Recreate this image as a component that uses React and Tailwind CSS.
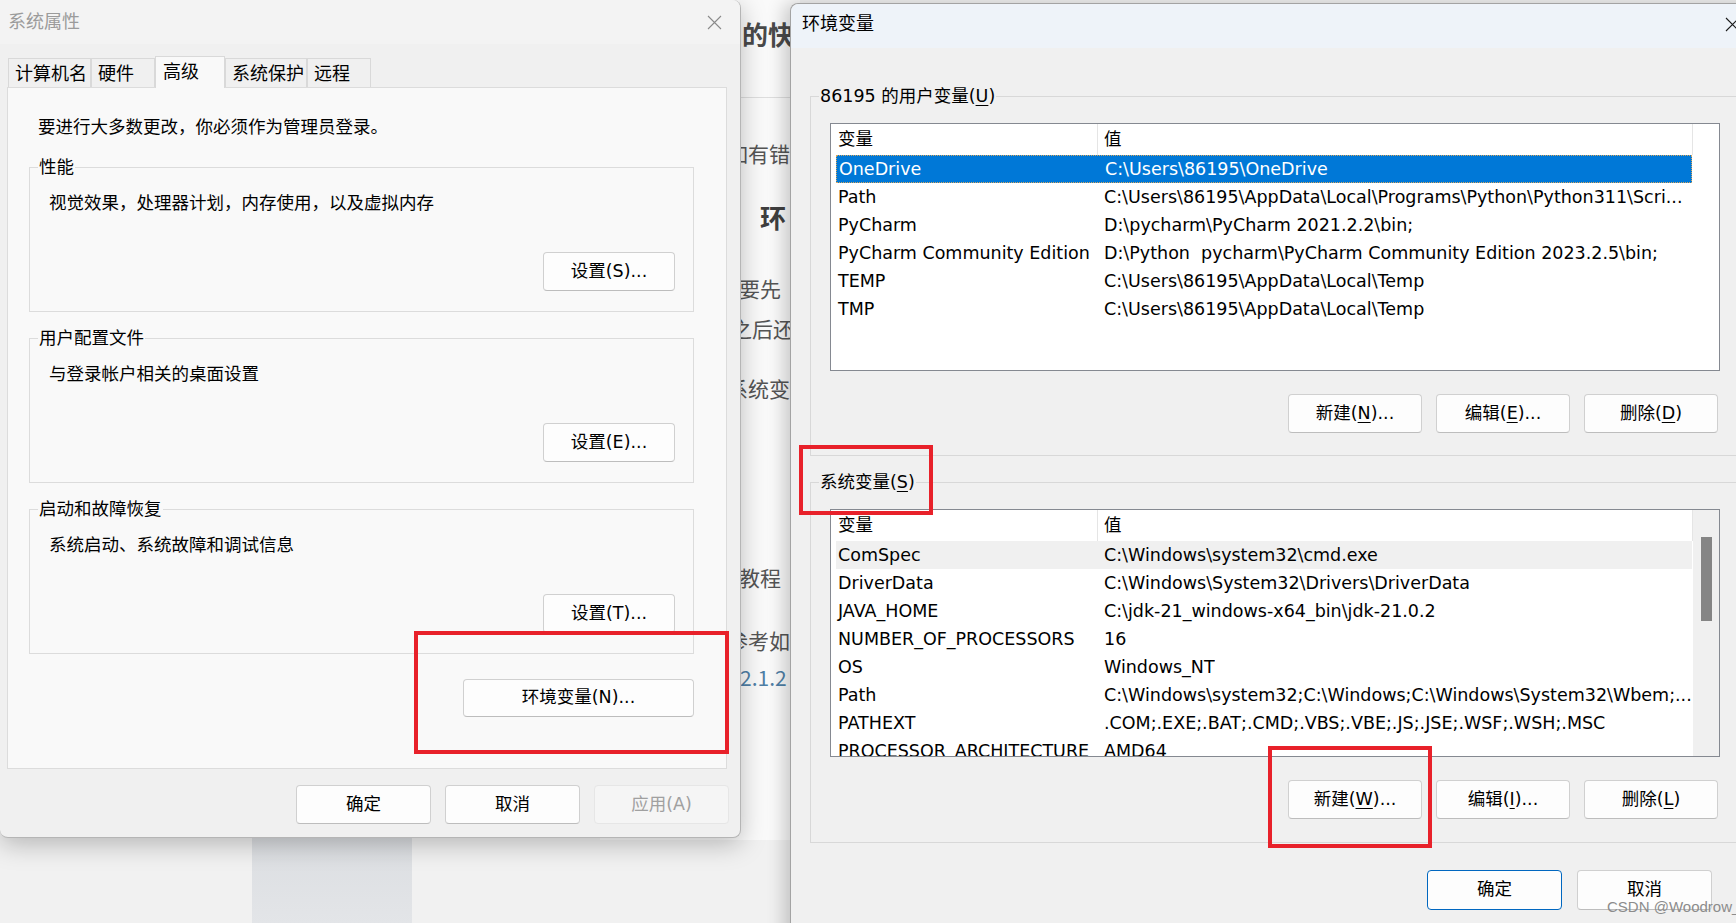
import React from "react";

function CloseX({ color = "#8a8a8a", className = "" }) {
  return (
    <svg width="15" height="15" viewBox="0 0 15 15" className={`shrink-0 ${className}`}>
      <path d="M1 1L14 14M14 1L1 14" stroke={color} strokeWidth="1.1" fill="none" />
    </svg>
  );
}

function Btn({ children, className = "", primary = false, disabled = false }) {
  const tone = primary
    ? "border-[1.5px] border-[#0067c0] bg-[#fdfdfd] text-black"
    : disabled
    ? "border border-[#e6e6e6] bg-[#f5f5f5] text-[#a0a0a0]"
    : "border border-[#d0d0d0] border-b-[#bdbdbd] bg-[#fdfdfd] text-black";
  return (
    <div className={`flex items-center justify-center whitespace-nowrap rounded-[4px] text-[17.5px] leading-none ${tone} ${className}`}>
      {children}
    </div>
  );
}

function U({ children }) {
  return <span className="underline underline-offset-[3px] decoration-1">{children}</span>;
}

function LeftGroup({ label, desc, btn, className = "" }) {
  return (
    <div className={`relative ml-[21px] h-[145px] w-[665px] shrink-0 border border-[#dcdcdc] ${className}`}>
      <span className="absolute -top-[13px] left-[8px] bg-[#f9f9f9] px-[1px] text-[17.5px] leading-[24px]">{label}</span>
      <div className="pl-[19px] pt-[23px] text-[17.5px] leading-[24px]">{desc}</div>
      <Btn className="ml-[513px] mt-[37px] h-[39px] w-[132px]">{btn}</Btn>
    </div>
  );
}

function Tab({ children, w, selected }) {
  return selected ? (
    <div className={`relative z-10 -mb-[1px] flex h-[32px] items-center border border-b-0 border-[#d9d9d9] bg-[#f9f9f9] pl-[7px] pb-[2px] text-[18px] ${w}`}>
      {children}
    </div>
  ) : (
    <div className={`flex h-[29px] items-center border border-b-0 border-[#d9d9d9] bg-[#f0f0f0] pl-[6px] text-[18px] ${w}`}>
      {children}
    </div>
  );
}

function LeftWindow() {
  return (
    <div className="absolute left-0 top-0 flex h-[838px] w-[741px] flex-col rounded-br-[8px] rounded-bl-[8px] rounded-tr-[8px] border-b border-r border-[#b5b5b5] bg-[#f0f0f0] shadow-[0_6px_26px_rgba(0,0,0,0.25)]">
      <div className="flex h-[44px] shrink-0 items-center justify-between rounded-tr-[8px] bg-[#f3f3f3] pl-[8px] pr-[18px]">
        <span className="whitespace-nowrap text-[18px] leading-none text-[#9b9b9b]">系统属性</span>
        <CloseX />
      </div>
      <div className="ml-[8px] mt-[13px] flex h-[30px] shrink-0 items-end">
        <Tab w="w-[83px]">计算机名</Tab>
        <Tab w="w-[64px]">硬件</Tab>
        <Tab w="w-[70px]" selected>高级</Tab>
        <Tab w="w-[82px]">系统保护</Tab>
        <Tab w="w-[64px]">远程</Tab>
      </div>
      <div className="ml-[7px] flex h-[682px] w-[720px] shrink-0 flex-col border border-[#dcdcdc] bg-[#f9f9f9]">
        <div className="ml-[30px] mt-[27px] text-[17.5px] leading-[24px]">要进行大多数更改，你必须作为管理员登录。</div>
        <LeftGroup className="mt-[28px]" label="性能" desc="视觉效果，处理器计划，内存使用，以及虚拟内存" btn="设置(S)..." />
        <LeftGroup className="mt-[26px]" label="用户配置文件" desc="与登录帐户相关的桌面设置" btn="设置(E)..." />
        <LeftGroup className="mt-[26px]" label="启动和故障恢复" desc="系统启动、系统故障和调试信息" btn="设置(T)..." />
        <Btn className="ml-[455px] mt-[25px] h-[38px] w-[231px]">环境变量(N)...</Btn>
      </div>
      <div className="ml-[296px] mt-[16px] flex gap-[14px]">
        <Btn className="h-[39px] w-[135px]">确定</Btn>
        <Btn className="h-[39px] w-[135px]">取消</Btn>
        <Btn className="h-[39px] w-[135px]" disabled>应用(A)</Btn>
      </div>
    </div>
  );
}

const userVars = [
  ["OneDrive", "C:\\Users\\86195\\OneDrive"],
  ["Path", "C:\\Users\\86195\\AppData\\Local\\Programs\\Python\\Python311\\Scri..."],
  ["PyCharm", "D:\\pycharm\\PyCharm 2021.2.2\\bin;"],
  ["PyCharm Community Edition", "D:\\Python  pycharm\\PyCharm Community Edition 2023.2.5\\bin;"],
  ["TEMP", "C:\\Users\\86195\\AppData\\Local\\Temp"],
  ["TMP", "C:\\Users\\86195\\AppData\\Local\\Temp"],
];

const sysVars = [
  ["ComSpec", "C:\\Windows\\system32\\cmd.exe"],
  ["DriverData", "C:\\Windows\\System32\\Drivers\\DriverData"],
  ["JAVA_HOME", "C:\\jdk-21_windows-x64_bin\\jdk-21.0.2"],
  ["NUMBER_OF_PROCESSORS", "16"],
  ["OS", "Windows_NT"],
  ["Path", "C:\\Windows\\system32;C:\\Windows;C:\\Windows\\System32\\Wbem;..."],
  ["PATHEXT", ".COM;.EXE;.BAT;.CMD;.VBS;.VBE;.JS;.JSE;.WSF;.WSH;.MSC"],
  ["PROCESSOR_ARCHITECTURE", "AMD64"],
];

function VarList({ rows, selected, hover, scroll }) {
  return (
    <div className="ml-[19px] mt-[26px] flex h-[248px] w-[890px] shrink-0 overflow-hidden border border-[#858991] bg-white">
      <div className="flex w-[862px] shrink-0 flex-col">
        <div className="flex h-[31px] shrink-0 items-center text-[17.5px]">
          <div className="flex h-full w-[267px] items-center border-r border-[#e5e5e5] pl-[7px]">变量</div>
          <div className="flex h-full w-[595px] items-center border-r border-[#e5e5e5] pl-[6px]">值</div>
        </div>
        {rows.map(([k, v], i) => {
          const sel = i === selected;
          const hov = i === hover;
          return (
            <div
              key={i}
              className={`ml-[5px] flex h-[28px] w-[856px] shrink-0 items-center whitespace-pre text-[17.5px] ${
                sel ? "border border-dotted border-[#d8a65c] bg-[#0078d7] text-white" : hov ? "bg-[#f0f0f0] text-black" : "text-black"
              }`}
            >
              <div className="w-[261px] shrink-0 overflow-hidden pl-[2px]">{k}</div>
              <div className="overflow-hidden pl-[7px]">{v}</div>
            </div>
          );
        })}
      </div>
      {scroll && (
        <div className="flex w-[26px] shrink-0 flex-col bg-[#f0f0f0] pl-[8px] pt-[27px]">
          <div className="h-[84px] w-[11px] bg-[#858585]" />
        </div>
      )}
    </div>
  );
}

function RightGroup({ label, children, h, className = "" }) {
  return (
    <div className={`relative ml-[19px] flex w-[960px] shrink-0 flex-col border border-[#d8d8d8] ${h} ${className}`}>
      <span className="absolute -top-[13px] left-[8px] whitespace-nowrap bg-[#f0f0f0] px-[1px] text-[17.5px] leading-[24px]">{label}</span>
      {children}
    </div>
  );
}

function RightWindow() {
  return (
    <div className="absolute left-[790px] top-[3px] flex h-[940px] w-[990px] flex-col rounded-tl-[8px] border-l border-t border-[#a3a3a3] bg-[#f0f0f0] shadow-[-6px_0_18px_rgba(0,0,0,0.2)]">
      <div className="flex h-[44px] shrink-0 items-center rounded-tl-[8px] bg-[#eef3f9] pb-[4px] pl-[11px]">
        <span className="w-[923px] shrink-0 whitespace-nowrap text-[18px] leading-none text-black">环境变量</span>
        <CloseX color="#1a1a1a" />
      </div>
      <RightGroup className="mt-[48px]" h="h-[360px]" label={<>86195 的用户变量(<U>U</U>)</>}>
        <VarList rows={userVars} selected={0} />
        <div className="ml-[477px] mt-[23px] flex gap-[14px]">
          <Btn className="h-[39px] w-[134px]">新建(<U>N</U>)...</Btn>
          <Btn className="h-[39px] w-[134px]">编辑(<U>E</U>)...</Btn>
          <Btn className="h-[39px] w-[134px]">删除(<U>D</U>)</Btn>
        </div>
      </RightGroup>
      <RightGroup className="mt-[26px]" h="h-[361px]" label={<>系统变量(<U>S</U>)</>}>
        <VarList rows={sysVars} hover={0} scroll />
        <div className="ml-[477px] mt-[23px] flex gap-[14px]">
          <Btn className="h-[39px] w-[134px]">新建(<U>W</U>)...</Btn>
          <Btn className="h-[39px] w-[134px]">编辑(<U>I</U>)...</Btn>
          <Btn className="h-[39px] w-[134px]">删除(<U>L</U>)</Btn>
        </div>
      </RightGroup>
      <div className="ml-[636px] mt-[27px] flex gap-[15px]">
        <Btn primary className="h-[40px] w-[135px]">确定</Btn>
        <Btn className="h-[40px] w-[135px]">取消</Btn>
      </div>
    </div>
  );
}

function Backdrop() {
  const t = "absolute whitespace-nowrap font-['Noto_Sans_CJK_SC',sans-serif]";
  return (
    <>
      <div className="absolute left-[600px] top-0 h-[840px] w-[200px] bg-[#fafafa]" />
      <div className="absolute left-[252px] top-[700px] h-[223px] w-[160px] bg-gradient-to-b from-[#cfd2d6] to-[#e3e5e8]" />
      <div className="absolute left-[700px] top-[97px] h-px w-[100px] bg-[#dedede]" />
      <div className={`${t} left-[742px] top-[16px] text-[26px] font-bold leading-[36px] text-[#4a4a4a]`}>的快</div>
      <div className={`${t} left-[727px] top-[138px] text-[21px] leading-[30px] text-[#555]`}>如有错</div>
      <div className={`${t} left-[760px] top-[199px] text-[26px] font-bold leading-[36px] text-[#3f3f3f]`}>环</div>
      <div className={`${t} left-[739px] top-[273px] text-[21px] leading-[30px] text-[#555]`}>要先</div>
      <div className={`${t} left-[731px] top-[313px] text-[21px] leading-[30px] text-[#555]`}>之后还</div>
      <div className={`${t} left-[727px] top-[373px] text-[21px] leading-[30px] text-[#555]`}>系统变</div>
      <div className={`${t} left-[739px] top-[562px] text-[21px] leading-[30px] text-[#555]`}>教程</div>
      <div className={`${t} left-[727px] top-[625px] text-[21px] leading-[30px] text-[#555]`}>参考如</div>
      <div className={`${t} left-[740px] top-[662px] text-[21px] leading-[30px] text-[#4f7fa6]`}>2.1.2</div>
    </>
  );
}

export default function App() {
  return (
    <div className="relative h-[923px] w-[1736px] overflow-hidden bg-[#f1f1f1] font-['DejaVu_Sans','Noto_Sans_CJK_SC',sans-serif] text-black">
      <Backdrop />
      <LeftWindow />
      <RightWindow />
      <div className="absolute left-[414px] top-[631px] h-[123px] w-[315px] border-[4px] border-[#e8212a]" />
      <div className="absolute left-[799px] top-[445px] h-[70px] w-[134px] border-[4px] border-[#e8212a]" />
      <div className="absolute left-[1268px] top-[746px] h-[102px] w-[164px] border-[4px] border-[#e8212a]" />
      <div className="absolute left-[1607px] top-[897px] whitespace-nowrap font-['Liberation_Sans',sans-serif] text-[15px] leading-[20px] text-[#8c8c8c]">
        CSDN @Woodrow_
      </div>
    </div>
  );
}
